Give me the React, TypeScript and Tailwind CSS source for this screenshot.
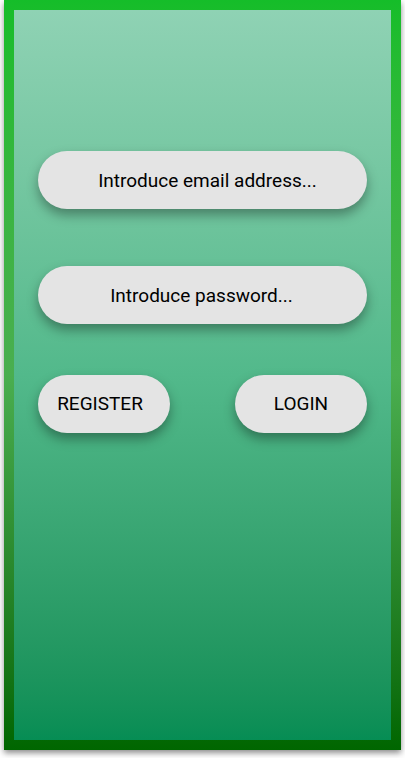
export default function App() {
  return (
    <div className="w-[405px] h-[758px] bg-white" style={{ fontFamily: "Roboto, sans-serif" }}>
      <div className="ml-[4px] w-[397px] h-[750px] p-[10px] bg-gradient-to-b from-[#15bd29] via-[#4aae4f] to-[#006600] shadow-[0_3px_6px_rgba(0,0,0,0.45)]">
        <div className="h-full bg-gradient-to-b from-[#8fd2b4] via-[#52b98b] to-[#068d54] px-[24px] pt-[141px] flex flex-col">
          <div className="h-[58px] rounded-full bg-[#e4e4e4] flex items-center justify-center pl-[10px] pt-[2px] text-[19px] text-black shadow-[0_6px_12px_rgba(0,0,0,0.35)]">
            Introduce email address...
          </div>
          <div className="mt-[57px] h-[58px] rounded-full bg-[#e4e4e4] flex items-center justify-center pr-[2px] pt-[2px] text-[19px] text-black shadow-[0_6px_12px_rgba(0,0,0,0.35)]">
            Introduce password...
          </div>
          <div className="mt-[51px] flex justify-between">
            <button className="w-[132px] h-[58px] rounded-full bg-[#e4e4e4] pr-[8px] text-[19px] text-black shadow-[0_6px_12px_rgba(0,0,0,0.35)]">
              REGISTER
            </button>
            <button className="w-[132px] h-[58px] rounded-full bg-[#e4e4e4] text-[19px] text-black shadow-[0_6px_12px_rgba(0,0,0,0.35)]">
              LOGIN
            </button>
          </div>
        </div>
      </div>
    </div>
  );
}
